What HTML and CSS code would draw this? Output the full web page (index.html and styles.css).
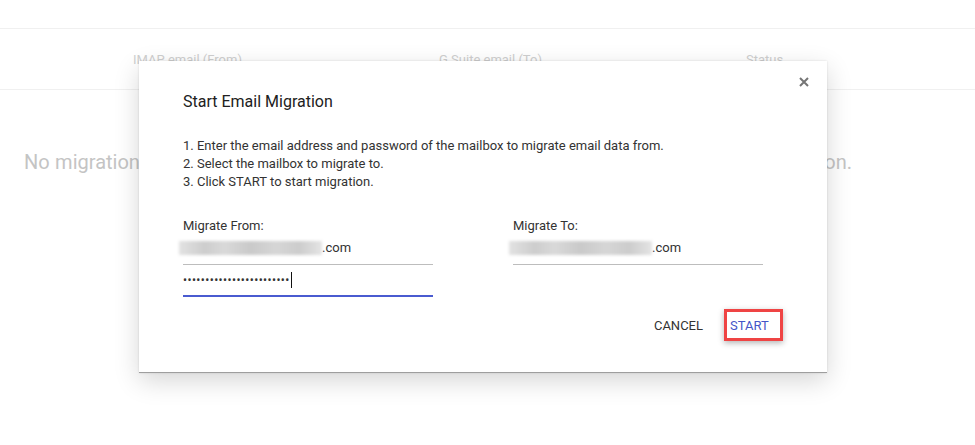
FILE: index.html
```html
<!DOCTYPE html>
<html lang="en">
<head>
    <meta charset="UTF-8">
    <meta name="viewport" content="width=device-width, initial-scale=1.0">
    <title>Email Migration</title>
    <link rel="stylesheet" href="styles.css">
</head>
<body>
    <div class="page">
        <div class="table-head">
            <div class="col">IMAP email (From)</div>
            <div class="col">G Suite email (To)</div>
            <div class="col">Status</div>
        </div>
        <p class="empty">No migration jobs found yet. Click the Start Migration button above to begin a new migration.</p>
    </div>

    <div class="dialog">
        <button class="close" aria-label="Close">
            <svg width="10" height="10" viewBox="0 0 10 10">
                <path d="M1 1L9 9M9 1L1 9" stroke="#757575" stroke-width="2" fill="none"/>
            </svg>
        </button>
        <h2 class="dialog-title">Start Email Migration</h2>
        <ol class="steps">
            <li>1. Enter the email address and password of the mailbox to migrate email data from.</li>
            <li>2. Select the mailbox to migrate to.</li>
            <li>3. Click START to start migration.</li>
        </ol>

        <div class="fields">
            <div class="field-group">
                <label>Migrate From:</label>
                <div class="field"><span class="blur"></span><span>.com</span></div>
                <div class="field password"><span class="dots">••••••••••••••••••••••••</span><span class="caret"></span></div>
            </div>
            <div class="field-group">
                <label>Migrate To:</label>
                <div class="field"><span class="blur"></span><span>.com</span></div>
            </div>
        </div>

        <div class="actions">
            <button class="btn">CANCEL</button>
            <button class="btn primary">START</button>
        </div>
    </div>
</body>
</html>
```

FILE: styles.css
```css
* {
    margin: 0;
    padding: 0;
    box-sizing: border-box;
}

body {
    font-family: Roboto, "Liberation Sans", Arial, sans-serif;
    background-color: #fff;
    color: #333;
    width: 975px;
    height: 445px;
    overflow: hidden;
    position: relative;
}

.page {
    padding-top: 28px;
}

.table-head {
    display: grid;
    grid-template-columns: 306px 307px 200px;
    padding-left: 133px;
    height: 62px;
    align-items: center;
    border-top: 1px solid #f0f0f0;
    border-bottom: 1px solid #f0f0f0;
    font-size: 13px;
    color: #cfcfcf;
}

.empty {
    margin-top: 60px;
    margin-left: 24px;
    width: 828px;
    font-size: 20px;
    color: #c4c4c4;
    white-space: nowrap;
    text-align: justify;
    text-align-last: justify;
}

.dialog {
    position: absolute;
    left: 139px;
    top: 61px;
    width: 688px;
    height: 312px;
    background-color: #fff;
    border-bottom: 1px solid #9e9e9e;
    box-shadow: 0 8px 24px rgba(0, 0, 0, 0.16), 0 0 2px rgba(0, 0, 0, 0.12);
    padding: 31px 44px 0 44px;
}

.close {
    position: absolute;
    top: 16px;
    right: 18px;
    width: 10px;
    height: 10px;
    border: none;
    background: none;
    display: flex;
}

.dialog-title {
    font-size: 16px;
    font-weight: 400;
    line-height: 20px;
    color: #212121;
}

.steps {
    list-style: none;
    margin-top: 25px;
    font-size: 13px;
    line-height: 18px;
    color: #333;
}

.fields {
    display: flex;
    gap: 80px;
    margin-top: 26px;
}

.field-group {
    width: 250px;
}

.field-group label {
    display: block;
    font-size: 13px;
    line-height: 18px;
    color: #333;
}

.field {
    display: flex;
    align-items: center;
    height: 30px;
    padding-top: 4px;
    padding-bottom: 8px;
    border-bottom: 1px solid #bdbdbd;
    font-size: 13px;
    color: #333;
}

.blur {
    display: inline-block;
    width: 143px;
    height: 14px;
    margin-left: -4px;
    background: linear-gradient(90deg, #e2e2e2 0%, #cdcdcd 18%, #d9d9d9 32%, #c9c9c9 50%, #d6d6d6 68%, #cccccc 84%, #e4e4e4 100%);
    filter: blur(1.5px);
}

.password {
    height: 32px;
    padding: 0;
    border-bottom: 2px solid #4a5bd0;
}

.dots {
    font-size: 12px;
    letter-spacing: 0.4px;
    color: #333;
}

.caret {
    display: inline-block;
    width: 1px;
    height: 16px;
    margin-left: 1px;
    background-color: #111;
}

.actions {
    position: absolute;
    right: 44px;
    bottom: 31px;
    display: flex;
    align-items: center;
    gap: 18px;
}

.btn {
    font-family: Roboto, "Liberation Sans", Arial, sans-serif;
    font-size: 13px;
    font-weight: 400;
    background: none;
    border: none;
    color: #333;
    height: 32px;
    padding: 0 3px;
}

.primary {
    width: 59px;
    text-align: left;
    color: #4455c8;
    border: 3px solid #ef4444;
    padding: 0 0 0 3px;
    box-shadow: 0 2px 6px rgba(0, 0, 0, 0.3);
}
```
